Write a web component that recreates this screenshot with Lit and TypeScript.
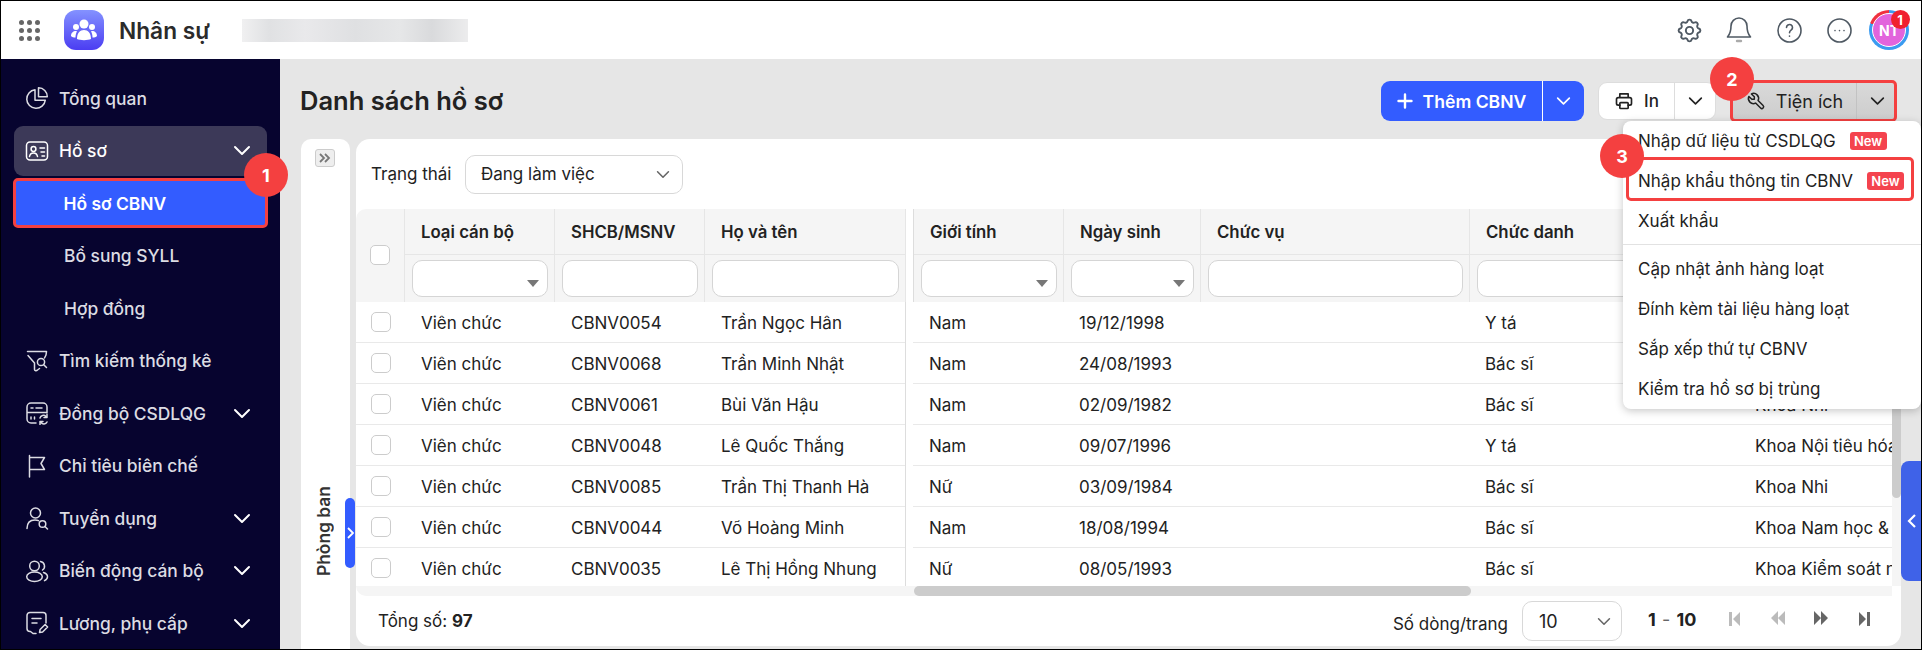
import { LitElement, html, css, svg } from 'lit';
import { customElement } from 'lit/decorators.js';

const chevron = html`<svg class="chev" viewBox="0 0 18 11"><path d="M2 2l7 7 7-7" /></svg>`;

const navIcons: Record<string, unknown> = {
  pie: svg`<path d="M10 3.800a9.300 9.300 0 1 0 10.300 10.400H10z"/><path d="M13.500 1.800a8.800 8.800 0 0 1 8.800 9h-8.800z"/>`,
  card: svg`<rect x="1.500" y="3" width="21" height="18" rx="3.500"/><circle cx="8.500" cy="10" r="2.400"/><path d="M4.500 17.500c.4-2.500 2-3.600 4-3.600s3.600 1.100 4 3.600M15 9h4.500M16 13h3.500M17 17h2.500"/>`,
  funnel: svg`<path d="M2.500 2.500h19l-.5 3.500-1.500 3M9.500 14L3 6.500M9.500 14v6.500c0 1.500 2 1.500 3 .5l2-1.500"/><circle cx="16" cy="13" r="3.600"/><path d="M18.500 15.500l3 3"/>`,
  sync: svg`<path d="M11 22H6a4 4 0 0 1-4-4V6a4 4 0 0 1 4-4h12a4 4 0 0 1 4 4v6M2 11.500h20M6 7h2M11 7h6M6 16v2M9.500 16v2"/><path d="M15 17a3.500 3.500 0 0 1 6-1.500l1 1M22 21a3.500 3.500 0 0 1-6 .5l-1-1M22 13.500v3h-3M15 23.500v-3h3"/>`,
  flag: svg`<path d="M4.500 23V1.500M4.500 3.500h15l-3.500 6 3.500 6h-15"/>`,
  recruit: svg`<circle cx="10.500" cy="7" r="5"/><path d="M2 22.500c0-5.500 3-8.500 8-8.500 1.500 0 2.500.2 3.500.7"/><circle cx="17.500" cy="18" r="3.300"/><path d="M20 20.500l2.500 2.500"/>`,
  people: svg`<circle cx="9.500" cy="7" r="4.800"/><ellipse cx="9.500" cy="17.800" rx="7.800" ry="4.700"/><path d="M15.500 2.500a4.700 4.700 0 0 1 2 8.500M18.500 13.500c2.500.8 4 2.300 4 4.300 0 1.700-1.200 3-3 3.800"/>`,
  salary: svg`<path d="M11 22.500H8l-2.500-2H5a3 3 0 0 1-3-3V4.500a3 3 0 0 1 3-3h13a3 3 0 0 1 3 3V12M7 7.500h9M7 12h5"/><path d="M14.500 21.500l.6-3 5-5 2.500 2.500-5 5z"/>`,
};

const nav = [
  { icon: 'pie', label: 'Tổng quan' },
  { icon: 'card', label: 'Hồ sơ', open: true, chevron: true },
  { label: 'Hồ sơ CBNV', sub: true, current: true },
  { label: 'Bổ sung SYLL', sub: true },
  { label: 'Hợp đồng', sub: true },
  { icon: 'funnel', label: 'Tìm kiếm thống kê' },
  { icon: 'sync', label: 'Đồng bộ CSDLQG', chevron: true },
  { icon: 'flag', label: 'Chỉ tiêu biên chế' },
  { icon: 'recruit', label: 'Tuyển dụng', chevron: true },
  { icon: 'people', label: 'Biến động cán bộ', chevron: true },
  { icon: 'salary', label: 'Lương, phụ cấp', chevron: true },
];

const rows = [
  ['Viên chức', 'CBNV0054', 'Trần Ngọc Hân', 'Nam', '19/12/1998', '', 'Y tá', ''],
  ['Viên chức', 'CBNV0068', 'Trần Minh Nhật', 'Nam', '24/08/1993', '', 'Bác sĩ', ''],
  ['Viên chức', 'CBNV0061', 'Bùi Văn Hậu', 'Nam', '02/09/1982', '', 'Bác sĩ', 'Khoa Nhi'],
  ['Viên chức', 'CBNV0048', 'Lê Quốc Thắng', 'Nam', '09/07/1996', '', 'Y tá', 'Khoa Nội tiêu hóa'],
  ['Viên chức', 'CBNV0085', 'Trần Thị Thanh Hà', 'Nữ', '03/09/1984', '', 'Bác sĩ', 'Khoa Nhi'],
  ['Viên chức', 'CBNV0044', 'Võ Hoàng Minh', 'Nam', '18/08/1994', '', 'Bác sĩ', 'Khoa Nam học & Hiếm muộn'],
  ['Viên chức', 'CBNV0035', 'Lê Thị Hồng Nhung', 'Nữ', '08/05/1993', '', 'Bác sĩ', 'Khoa Kiểm soát nhiễm khuẩn'],
];

@customElement('app-root')
export class AppRoot extends LitElement {
  static styles = css`
    :host {
      display: flex;
      flex-direction: column;
      position: relative;
      box-sizing: border-box;
      width: 1922px;
      height: 650px;
      border: 1px solid #000;
      overflow: hidden;
      font-family: Inter, 'Noto Sans', sans-serif;
      font-size: 17px;
      color: #222;
      background: #e6e6e6;
    }
    * { box-sizing: border-box; }
    svg { display: block; flex: none; }

    /* top bar */
    .top {
      height: 58px;
      flex: none;
      display: flex;
      align-items: center;
      background: #fff;
      padding: 0 7px 0 18px;
    }
    .dots { display: grid; grid-template-columns: repeat(3, 5px); gap: 3px; width: 21px; margin-right: 24px; }
    .dots i { width: 5px; height: 5px; border-radius: 50%; background: #666; }
    .logo {
      width: 40px;
      height: 40px;
      border-radius: 12px;
      background: linear-gradient(#8492ff, #4b3df2);
      display: flex;
      align-items: center;
      justify-content: center;
      margin-right: 15px;
    }
    .app { font-size: 22.7px; font-weight: 600; color: #2b2b2b; width: 123px; }
    .blur {
      width: 226px;
      height: 23px;
      background: linear-gradient(90deg, #f0f0f1, #e0e1e3 12%, #e9e9eb 28%, #dfe0e2 50%, #e6e7e8 70%, #d9dadc 84%, #ececed);
    }
    .tools { margin-left: auto; display: flex; align-items: center; }
    .tool { width: 50px; display: flex; justify-content: center; color: #4f5963; }
    .tool svg { fill: none; stroke: currentColor; stroke-width: 1.6; stroke-linecap: round; stroke-linejoin: round; }
    .avatar {
      position: relative;
      width: 40px;
      height: 40px;
      margin: 0 5px;
      border-radius: 50%;
      padding: 3px;
      background: conic-gradient(#3b9bf0 0 290deg, #f0313f 290deg 360deg);
    }
    .avatar b {
      display: flex;
      align-items: center;
      justify-content: center;
      height: 100%;
      border-radius: 50%;
      border: 1px solid #fff;
      background: #e264dc;
      color: #fff;
      font-size: 14px;
      font-weight: 700;
    }
    .avatar span {
      position: absolute;
      top: 0;
      right: -0.5px;
      width: 19px;
      height: 19px;
      border-radius: 50%;
      background: #f0212f;
      color: #fff;
      font-size: 13px;
      font-weight: 700;
      display: flex;
      align-items: center;
      justify-content: center;
    }

    .body { flex: 1; min-height: 0; display: flex; }

    /* sidebar */
    .side {
      position: relative;
      width: 279px;
      flex: none;
      background: #07042f;
      padding: 14px 13px 0;
    }
    .nav {
      height: 50px;
      margin-bottom: 2.5px;
      display: flex;
      align-items: center;
      gap: 10px;
      padding: 0 16px 0 11px;
      border-radius: 9px;
      color: #dcdce3;
      font-size: 17.4px;
      font-weight: 500;
    }
    .nav svg.ico {
      width: 24px;
      height: 24px;
      fill: none;
      stroke: currentColor;
      stroke-width: 1.5;
      stroke-linecap: round;
      stroke-linejoin: round;
    }
    .nav .chev { margin-left: auto; width: 18px; height: 11px; fill: none; stroke: #fff; stroke-width: 2; stroke-linecap: round; stroke-linejoin: round; }
    .nav.open { background: #3c3958; color: #fff; }
    .nav.sub { padding-left: 50px; }
    .nav.current {
      margin: 0 -1px 2.5px;
      border: 3.5px solid #f44040;
      border-radius: 5px;
      background: #335cff;
      color: #fff;
      font-weight: 600;
      padding-left: 47.5px;
    }

    .mark {
      position: absolute;
      width: 44px;
      height: 44px;
      border-radius: 50%;
      background: #f44040;
      color: #fff;
      font-size: 18px;
      font-weight: 700;
      display: flex;
      align-items: center;
      justify-content: center;
      z-index: 5;
    }
    .side .mark { left: 243px; top: 94px; }

    /* content */
    .main { flex: 1; min-width: 0; display: flex; flex-direction: column; }
    .bar {
      height: 40px;
      margin: 22px 27px 18px 20px;
      display: flex;
      align-items: center;
      flex: none;
    }
    h1 { margin: -2px 0 0; font-size: 25.5px; font-weight: 600; color: #222; }
    .actions { margin-left: auto; display: flex; align-items: center; }
    .btn { display: flex; align-items: center; justify-content: center; gap: 10px; font-weight: 500; height: 100%; }
    .btn svg { fill: none; stroke: currentColor; stroke-linecap: round; stroke-linejoin: round; }
    .btn .chev { width: 15px; height: 10px; stroke-width: 2; }
    .btn + .btn { flex: 1; }
    .add { display: flex; height: 40px; width: 203px; border-radius: 9px; background: #335cff; color: #fff; margin-right: 14px; }
    .add .btn:first-child { width: 162px; border-right: 1px solid #fff; font-weight: 600; font-size: 17.6px; }
    .print { display: flex; height: 38px; width: 118px; border-radius: 9px; background: #fff; border: 1px solid #ddd; margin-right: 17px; }
    .print .btn:first-child { width: 76px; border-right: 1px solid #ddd; }
    .util {
      position: relative;
      display: flex;
      width: 161px;
      height: 36px;
      background: linear-gradient(#d9d9d9, #cdcdcd);
      outline: 3.5px solid #f44040;
      border-radius: 2px;
    }
    .util .btn:first-child { width: 124px; border-right: 1px solid #c2c2c2; font-size: 18px; font-weight: 400; }
    .util .btn + .btn { padding-left: 4px; }
    .util > .mark { left: -23px; top: -26px; }

    .menu {
      position: absolute;
      left: -110px;
      top: 38px;
      width: 298px;
      background: #fff;
      border-radius: 8px;
      box-shadow: 0 2px 8px rgba(0, 0, 0, 0.22);
      z-index: 4;
    }
    .item { position: relative; height: 40px; display: flex; align-items: center; padding-left: 15px; gap: 14px; }
    .item em {
      width: 37px;
      height: 18px;
      border-radius: 3px;
      background: #f4434e;
      color: #fff;
      font-style: normal;
      font-size: 13px;
      font-weight: 600;
      display: flex;
      align-items: center;
      justify-content: center;
    }
    .sep { height: 8px; padding-top: 3px; }
    .sep::before { content: ''; display: block; height: 1px; background: #e2e2e2; }
    .frame { position: absolute; left: 3px; right: 7px; top: -4px; bottom: 0; border: 3.5px solid #f44040; border-radius: 5px; }
    .item .mark { left: -23px; top: -27px; }

    .work { flex: 1; min-height: 0; display: flex; gap: 6px; padding-left: 21px; padding-right: 20px; }
    .dept {
      position: relative;
      width: 49px;
      flex: none;
      background: #fff;
      border-radius: 10px 10px 0 0;
      display: flex;
      flex-direction: column;
      align-items: center;
      padding: 10px 0 73px;
    }
    .expand {
      width: 20px;
      height: 18px;
      border: 1px solid #ccc;
      border-radius: 3px;
      background: #eee;
      display: flex;
      align-items: center;
      justify-content: center;
      margin-left: -2px;
    }
    .dept .label {
      margin-top: auto;
      margin-left: -4px;
      writing-mode: vertical-rl;
      transform: rotate(180deg);
      font-size: 17.4px;
      font-weight: 600;
      color: #333;
    }
    .tab {
      position: absolute;
      right: -5px;
      top: 359px;
      width: 10px;
      height: 70px;
      border-radius: 5px;
      background: #335cff;
      display: flex;
      align-items: center;
      justify-content: center;
      z-index: 2;
    }

    .panel {
      position: relative;
      flex: 1;
      min-width: 0;
      height: 507px;
      background: #fff;
      border-radius: 14px;
      display: flex;
      flex-direction: column;
      overflow: hidden;
    }
    .filter { height: 70px; flex: none; display: flex; align-items: center; padding: 0 15px; }
    .filter span { width: 94px; }
    .select {
      display: flex;
      align-items: center;
      justify-content: space-between;
      border: 1px solid #d8d8d8;
      border-radius: 10px;
      background: #fff;
      height: 39px;
    }
    .filter .select { width: 218px; padding: 0 12px 0 15px; }
    .select .chev { width: 14px; height: 9px; fill: none; stroke: #666; stroke-width: 2; stroke-linecap: round; stroke-linejoin: round; }

    .table { flex: none; height: 377px; display: flex; }
    .frozen { width: 550px; flex: none; border-right: 1px solid #ddd; margin-right: 7px; }
    .scroll { width: 979px; flex: none; overflow: hidden; }
    .sheet { width: 1126px; }
    .vbar { flex: 1; background: #f5f5f5; }
    .vbar i { display: block; width: 100%; height: 289px; background: #ccc; border-radius: 0 0 5px 5px; }

    .head { display: grid; grid-template-rows: 46px 47px; background: #f5f5f5; }
    .frozen .head, .frozen .row { grid-template-columns: 49px 150px 150px 201px; }
    .scroll .head, .scroll .row { grid-template-columns: 150px 137px 269px 270px 300px; }
    .scroll .head { border-left: 1px solid #ddd; }
    .frozen .head { border-radius: 10px 0 0 0; }
    .th {
      display: flex;
      align-items: center;
      padding-left: 16px;
      font-size: 16.8px;
      font-weight: 600;
      border-right: 1px solid #e6e6e6;
      border-bottom: 1px solid #e6e6e6;
    }
    .tf { display: flex; align-items: center; padding: 0 6px 0 7px; border-right: 1px solid #e6e6e6; }
    .cb { width: 20px; height: 20px; border: 1px solid #ccc; border-radius: 5px; background: #fff; }
    .hcb { grid-row: 1 / 3; display: flex; align-items: center; justify-content: center; border-right: 1px solid #e6e6e6; padding-bottom: 2px; }
    .input {
      position: relative;
      width: 100%;
      height: 37px;
      border: 1px solid #d5d5d5;
      border-radius: 10px;
      background: #fff;
    }
    .input.drop::after {
      content: '';
      position: absolute;
      right: 8px;
      top: 19px;
      border-left: 6px solid transparent;
      border-right: 6px solid transparent;
      border-top: 7px solid #777;
    }
    .rows { height: 284px; overflow: hidden; }
    .row { display: grid; height: 41px; align-items: center; border-bottom: 1px solid #e9e9e9; }
    .td { padding: 1px 0 0 16px; white-space: nowrap; overflow: hidden; }
    .rcb { display: flex; justify-content: center; padding-left: 1px; }

    .hscroll { height: 10px; background: #f5f5f5; border-radius: 0 0 0 10px; flex: none; margin-right: 9px; padding-left: 558px; }
    .hscroll i { display: block; width: 557px; height: 10px; border-radius: 5px; background: #ccc; }

    .foot { flex: 1; display: flex; align-items: center; padding: 0 0 0 22px; }
    .foot .rowsel { margin-left: auto; display: flex; align-items: center; gap: 14px; margin-top: 5px; }
    .foot .rowsel .select { width: 100px; height: 40px; padding: 0 10px 0 16px; font-size: 18px; margin-top: -5px; }
    .total b { font-weight: 700; }
    .range { margin-left: 26px; font-size: 18px; width: 61px; font-weight: 700; white-space: nowrap; word-spacing: 2px; margin-top: -4px; }
    .range span { font-weight: 400; color: #666; }
    .pages { display: grid; grid-template-columns: repeat(4, 43px); justify-items: center; margin-left: 4px; margin-right: 16px; margin-top: -4px; }

    .side-tab {
      position: absolute;
      right: 0;
      top: 460px;
      width: 20px;
      height: 120px;
      border-radius: 8px 0 0 8px;
      background: #3f62e8;
      display: flex;
      align-items: center;
      justify-content: center;
      z-index: 3;
    }
  `;

  private checkCell() {
    return html`<div class="rcb"><div class="cb"></div></div>`;
  }

  render() {
    return html`
      <div class="top">
        <div class="dots">${Array.from({ length: 9 }, () => html`<i></i>`)}</div>
        <div class="logo">
          <svg width="26" height="22" viewBox="0 0 26 22" fill="#fff">
            <circle cx="13" cy="5" r="4.500" /><circle cx="5" cy="8" r="3" /><circle cx="21" cy="8" r="3" />
            <path d="M6 20c0-6 3-9 7-9s7 3 7 9c-3 1.500-11 1.500-14 0zM0 17c0-3 2-5 5-5l1 .2C5 14 4.500 16 4.500 18.500 2.500 18.500 1 18 0 17zM26 17c0-3-2-5-5-5l-1 .2c1 1.800 1.500 3.800 1.500 6.300 2 0 3.500-.5 4.500-1.500z" />
          </svg>
        </div>
        <div class="app">Nhân sự</div>
        <div class="blur"></div>
        <div class="tools">
          <div class="tool">
            <svg width="29" height="29" viewBox="0 0 24 24">
              <path d="M10.325 4.317c.426-1.756 2.924-1.756 3.35 0a1.724 1.724 0 0 0 2.573 1.066c1.543-.94 3.31.826 2.37 2.37a1.724 1.724 0 0 0 1.065 2.572c1.756.426 1.756 2.924 0 3.35a1.724 1.724 0 0 0-1.066 2.573c.94 1.543-.826 3.31-2.37 2.37a1.724 1.724 0 0 0-2.572 1.065c-.426 1.756-2.924 1.756-3.35 0a1.724 1.724 0 0 0-2.573-1.066c-1.543.94-3.31-.826-2.37-2.37a1.724 1.724 0 0 0-1.065-2.572c-1.756-.426-1.756-2.924 0-3.35a1.724 1.724 0 0 0 1.066-2.573c-.94-1.543.826-3.31 2.37-2.37 1 .608 2.296.07 2.572-1.065z" />
              <circle cx="12" cy="12" r="3" />
            </svg>
          </div>
          <div class="tool">
            <svg width="26" height="28" viewBox="0 0 26 28">
              <path d="M13 2a8 8 0 0 0-8 8c0 7-2 9-3.500 11h23c-1.500-2-3.500-4-3.500-11a8 8 0 0 0-8-8z" />
              <path d="M11 25h4" stroke="#aaa" stroke-width="2.400" />
            </svg>
          </div>
          <div class="tool">
            <svg width="25" height="25" viewBox="0 0 25 25">
              <circle cx="12.500" cy="12.500" r="11.500" />
              <path d="M9.500 9.500a3 3 0 1 1 4.800 2.400c-1.100.8-1.800 1.400-1.800 2.800M12.500 18v.2" />
            </svg>
          </div>
          <div class="tool">
            <svg width="25" height="25" viewBox="0 0 25 25">
              <circle cx="12.500" cy="12.500" r="11.500" />
              <path d="M8 12.500v.1M12.500 12.500v.1M17 12.500v.1" />
            </svg>
          </div>
          <div class="avatar"><b>NT</b><span>1</span></div>
        </div>
      </div>

      <div class="body">
        <div class="side">
          ${nav.map(
            (n) => html`
              <div class="nav ${n.sub ? 'sub' : ''} ${n.open ? 'open' : ''} ${n.current ? 'current' : ''}">
                ${n.icon ? html`<svg class="ico" viewBox="0 0 24 24">${navIcons[n.icon]}</svg>` : ''}
                <span>${n.label}</span>
                ${n.chevron ? chevron : ''}
              </div>
            `
          )}
          <div class="mark">1</div>
        </div>

        <div class="main">
          <div class="bar">
            <h1>Danh sách hồ sơ</h1>
            <div class="actions">
              <div class="add">
                <div class="btn">
                  <svg width="16" height="16" viewBox="0 0 16 16" stroke-width="2.400"><path d="M8 1.500v13M1.500 8h13" /></svg>
                  Thêm CBNV
                </div>
                <div class="btn">${chevron}</div>
              </div>
              <div class="print">
                <div class="btn">
                  <svg width="20" height="20" viewBox="0 0 24 24" stroke-width="2" stroke="#555">
                    <path d="M7 8V3.500h10V8M7 17H5a2 2 0 0 1-2-2v-5a2 2 0 0 1 2-2h14a2 2 0 0 1 2 2v5a2 2 0 0 1-2 2h-2" />
                    <rect x="7" y="14" width="10" height="7" rx="1" />
                  </svg>
                  In
                </div>
                <div class="btn">${chevron}</div>
              </div>
              <div class="util">
                <div class="btn">
                  <svg width="20" height="20" viewBox="0 0 24 24" stroke-width="1.800">
                    <path d="M7 10h3v-3l-3.500-3.500a6 6 0 0 1 8 8l6 6a2 2 0 0 1-3 3l-6-6a6 6 0 0 1-8-8l3.500 3.500" />
                  </svg>
                  Tiện ích
                </div>
                <div class="btn">${chevron}</div>
                <div class="mark">2</div>
                <div class="menu">
                  <div class="item">Nhập dữ liệu từ CSDLQG <em>New</em></div>
                  <div class="item">
                    Nhập khẩu thông tin CBNV <em>New</em>
                    <div class="frame"></div>
                    <div class="mark">3</div>
                  </div>
                  <div class="item">Xuất khẩu</div>
                  <div class="sep"></div>
                  <div class="item">Cập nhật ảnh hàng loạt</div>
                  <div class="item">Đính kèm tài liệu hàng loạt</div>
                  <div class="item">Sắp xếp thứ tự CBNV</div>
                  <div class="item">Kiểm tra hồ sơ bị trùng</div>
                </div>
              </div>
            </div>
          </div>

          <div class="work">
            <div class="dept">
              <div class="expand">
                <svg width="12" height="10" viewBox="0 0 12 10" fill="none" stroke="#777" stroke-width="1.800">
                  <path d="M1 1l4 4-4 4M6 1l4 4-4 4" />
                </svg>
              </div>
              <div class="label">Phòng ban</div>
              <div class="tab">
                <svg width="7" height="12" viewBox="0 0 7 12" fill="none" stroke="#fff" stroke-width="1.800"><path d="M1 1l5 5-5 5" /></svg>
              </div>
            </div>

            <div class="panel">
              <div class="filter">
                <span>Trạng thái</span>
                <div class="select">Đang làm việc ${chevron}</div>
              </div>
              <div class="table">
                <div class="frozen">
                  <div class="head">
                    <div class="hcb"><div class="cb"></div></div>
                    <div class="th">Loại cán bộ</div>
                    <div class="th">SHCB/MSNV</div>
                    <div class="th">Họ và tên</div>
                    <div class="tf"><div class="input drop"></div></div>
                    <div class="tf"><div class="input"></div></div>
                    <div class="tf"><div class="input"></div></div>
                  </div>
                  <div class="rows">
                    ${rows.map(
                      (r) => html`<div class="row">
                        ${this.checkCell()}
                        <div class="td">${r[0]}</div>
                        <div class="td">${r[1]}</div>
                        <div class="td">${r[2]}</div>
                      </div>`
                    )}
                  </div>
                </div>
                <div class="scroll">
                  <div class="sheet">
                    <div class="head">
                      <div class="th">Giới tính</div>
                      <div class="th">Ngày sinh</div>
                      <div class="th">Chức vụ</div>
                      <div class="th">Chức danh</div>
                      <div class="th">Khoa</div>
                      <div class="tf"><div class="input drop"></div></div>
                      <div class="tf"><div class="input drop"></div></div>
                      <div class="tf"><div class="input"></div></div>
                      <div class="tf"><div class="input"></div></div>
                      <div class="tf"><div class="input"></div></div>
                    </div>
                    <div class="rows">
                      ${rows.map(
                        (r) => html`<div class="row">
                          <div class="td">${r[3]}</div>
                          <div class="td">${r[4]}</div>
                          <div class="td">${r[5]}</div>
                          <div class="td">${r[6]}</div>
                          <div class="td">${r[7]}</div>
                        </div>`
                      )}
                    </div>
                  </div>
                </div>
                <div class="vbar"><i></i></div>
              </div>
              <div class="hscroll"><i></i></div>
              <div class="foot">
                <div class="total">Tổng số: <b>97</b></div>
                <div class="rowsel">
                  <span>Số dòng/trang</span>
                  <div class="select">10 ${chevron}</div>
                </div>
                <div class="range">1 <span>-</span> 10</div>
                <div class="pages">
                  <svg width="12" height="16" viewBox="0 0 12 16" fill="#bbb"><path d="M0 1h3v14H0zM11 1v14L4 8z" /></svg>
                  <svg width="14" height="14" viewBox="0 0 14 14" fill="#bbb"><path d="M7 0v14L0 7zM14 0v14L7 7z" /></svg>
                  <svg width="14" height="14" viewBox="0 0 14 14" fill="#666"><path d="M0 0v14l7-7zM7 0v14l7-7z" /></svg>
                  <svg width="12" height="16" viewBox="0 0 12 16" fill="#666"><path d="M12 1H9v14h3zM1 1v14l7-7z" /></svg>
                </div>
              </div>
            </div>
          </div>
        </div>
      </div>

      <div class="side-tab">
        <svg width="9" height="14" viewBox="0 0 9 14" fill="none" stroke="#fff" stroke-width="2.200"><path d="M8 1L2 7l6 6" /></svg>
      </div>
    `;
  }
}
